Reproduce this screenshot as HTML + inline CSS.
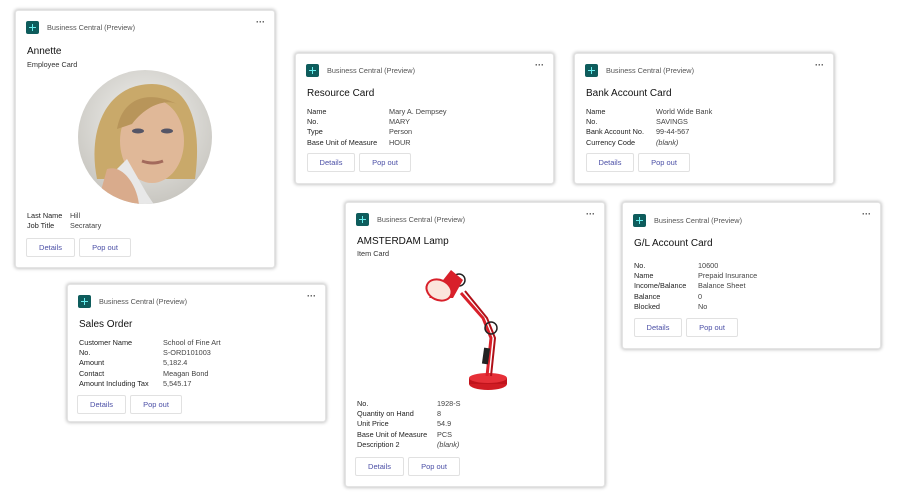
<!DOCTYPE html><html><head><style>
*{margin:0;padding:0;box-sizing:border-box}
body{width:908px;height:499px;background:#fff;position:relative;overflow:hidden;font-family:"Liberation Sans",sans-serif;color:#242424}
.c{position:absolute;background:#fff;border:1px solid #e4e4e4;box-shadow:0 0 3px 1px rgba(0,0,0,.22);border-radius:3px}
.ic{position:absolute;left:10px;top:10px;width:13px;height:13px;background:#0e5c5c;border-radius:2px}
.ic:before{content:"";position:absolute;left:6px;top:3px;width:1.4px;height:7px;background:#6ee;}
.ic:after{content:"";position:absolute;left:3px;top:6px;width:7px;height:1.4px;background:#6ee;}
.hd{position:absolute;left:31px;top:12px;font-size:7.3px;color:#555}
.dt{position:absolute;right:9px;top:6px;font-size:9px;color:#444;letter-spacing:0px;font-weight:bold}
.t{position:absolute;left:11px;font-size:10px;color:#111}
.s{position:absolute;left:11px;font-size:7.3px;color:#333}
.r{position:absolute;left:11px;font-size:7.3px;line-height:10.2px;color:#222}
.r div{white-space:nowrap}
.r span{position:absolute;color:#444}
.b{position:absolute;height:19px;border:1px solid #e1e1e1;border-radius:2px;font-size:7.5px;color:#4b4fa6;text-align:center;line-height:17px}
</style></head><body>

<div class="c" style="left:15px;top:10px;width:260px;height:258px">
<div class="ic"></div><div class="hd">Business Central (Preview)</div><div class="dt">···</div>
<div class="t" style="top:35px">Annette</div><div class="s" style="top:49px">Employee Card</div>
<svg style="position:absolute;left:61px;top:58px" width="136" height="136" viewBox="0 0 136 136">
<defs><clipPath id="cp"><circle cx="68" cy="68" r="67"/></clipPath>
<radialGradient id="bg" cx="50%" cy="40%" r="60%"><stop offset="0" stop-color="#f4f4f2"/><stop offset="1" stop-color="#c8c6c0"/></radialGradient></defs>
<g clip-path="url(#cp)">
<rect width="136" height="136" fill="url(#bg)"/>
<path d="M20 110 C 10 60 30 15 75 15 C 115 15 125 60 118 110 Z" fill="#c9a96a"/>
<ellipse cx="75" cy="72" rx="32" ry="42" fill="#e0b898"/>
<path d="M40 60 C 45 30 70 20 100 35 C 90 30 70 35 55 55 Z" fill="#b8955a"/>
<ellipse cx="61" cy="62" rx="6" ry="2.5" fill="#556"/><ellipse cx="90" cy="62" rx="6" ry="2.5" fill="#556"/>
<path d="M65 92 Q76 96 86 92" stroke="#a36a5c" stroke-width="3" fill="none"/>
<path d="M50 90 L70 125 L80 140 L60 140 L40 100 Z" fill="#e8e8e8"/>
<path d="M30 100 C 45 95 60 115 62 136 L 20 136 Z" fill="#d9ab8c"/>
</g></svg>
<div class="r" style="top:200px"><div>Last Name<span style="left:43px">Hill</span></div><div>Job Title<span style="left:43px">Secratary</span></div></div>
<div class="b" style="left:10px;top:227px;width:49px">Details</div><div class="b" style="left:63px;top:227px;width:52px">Pop out</div>
</div>

<div class="c" style="left:295px;top:53px;width:259px;height:131px">
<div class="ic"></div><div class="hd">Business Central (Preview)</div><div class="dt">···</div>
<div class="t" style="top:34px">Resource Card</div>
<div class="r" style="top:53px"><div>Name<span style="left:82px">Mary A. Dempsey</span></div><div>No.<span style="left:82px">MARY</span></div><div>Type<span style="left:82px">Person</span></div><div>Base Unit of Measure<span style="left:82px">HOUR</span></div></div>
<div class="b" style="left:11px;top:99px;width:48px">Details</div><div class="b" style="left:63px;top:99px;width:52px">Pop out</div>
</div>

<div class="c" style="left:574px;top:53px;width:260px;height:131px">
<div class="ic"></div><div class="hd">Business Central (Preview)</div><div class="dt">···</div>
<div class="t" style="top:34px">Bank Account Card</div>
<div class="r" style="top:53px"><div>Name<span style="left:70px">World Wide Bank</span></div><div>No.<span style="left:70px">SAVINGS</span></div><div>Bank Account No.<span style="left:70px">99-44-567</span></div><div>Currency Code<span style="left:70px;font-style:italic">(blank)</span></div></div>
<div class="b" style="left:11px;top:99px;width:48px">Details</div><div class="b" style="left:63px;top:99px;width:52px">Pop out</div>
</div>

<div class="c" style="left:67px;top:284px;width:259px;height:138px">
<div class="ic"></div><div class="hd">Business Central (Preview)</div><div class="dt">···</div>
<div class="t" style="top:34px">Sales Order</div>
<div class="r" style="top:53px"><div>Customer Name<span style="left:84px">School of Fine Art</span></div><div>No.<span style="left:84px">S-ORD101003</span></div><div>Amount<span style="left:84px">5,182.4</span></div><div>Contact<span style="left:84px">Meagan Bond</span></div><div>Amount Including Tax<span style="left:84px">5,545.17</span></div></div>
<div class="b" style="left:9px;top:110px;width:49px">Details</div><div class="b" style="left:62px;top:110px;width:52px">Pop out</div>
</div>

<div class="c" style="left:345px;top:202px;width:260px;height:285px">
<div class="ic"></div><div class="hd">Business Central (Preview)</div><div class="dt">···</div>
<div class="t" style="top:33px">AMSTERDAM Lamp</div><div class="s" style="top:46px">Item Card</div>
<svg style="position:absolute;left:75px;top:55px" width="110" height="135" viewBox="0 0 110 135">
<ellipse cx="67" cy="126" rx="19" ry="6" fill="#d01c24"/>
<rect x="48" y="120" width="38" height="6" fill="#c0141c"/>
<ellipse cx="67" cy="120" rx="19" ry="5" fill="#e63038"/>
<path d="M66 118 L70 80 L62 60 L40 35" stroke="#d8202a" stroke-width="3" fill="none"/>
<path d="M70 118 L74 80 L66 60 L44 33" stroke="#b01018" stroke-width="2" fill="none"/>
<rect x="62" y="90" width="6" height="16" fill="#222" transform="rotate(8 65 98)"/>
<circle cx="70" cy="70" r="6" fill="none" stroke="#222" stroke-width="1.5"/>
<circle cx="38" cy="22" r="6" fill="none" stroke="#222" stroke-width="1.5"/>
<path d="M30 12 L42 22 L32 40 L8 40 Z" fill="#d8202a"/>
<ellipse cx="18" cy="32" rx="13" ry="10" fill="#fbe5dc" stroke="#d8202a" stroke-width="2" transform="rotate(25 18 32)"/>
</svg>
<div class="r" style="top:196px"><div>No.<span style="left:80px">1928-S</span></div><div>Quantity on Hand<span style="left:80px">8</span></div><div>Unit Price<span style="left:80px">54.9</span></div><div>Base Unit of Measure<span style="left:80px">PCS</span></div><div>Description 2<span style="left:80px;font-style:italic">(blank)</span></div></div>
<div class="b" style="left:9px;top:254px;width:49px">Details</div><div class="b" style="left:62px;top:254px;width:52px">Pop out</div>
</div>

<div class="c" style="left:622px;top:202px;width:259px;height:147px">
<div class="ic" style="top:11px"></div><div class="hd" style="top:13px">Business Central (Preview)</div><div class="dt">···</div>
<div class="t" style="top:35px">G/L Account Card</div>
<div class="r" style="top:58px"><div>No.<span style="left:64px">10600</span></div><div>Name<span style="left:64px">Prepaid Insurance</span></div><div>Income/Balance<span style="left:64px">Balance Sheet</span></div><div>Balance<span style="left:64px">0</span></div><div>Blocked<span style="left:64px">No</span></div></div>
<div class="b" style="left:11px;top:115px;width:48px">Details</div><div class="b" style="left:63px;top:115px;width:52px">Pop out</div>
</div>
</body></html>
